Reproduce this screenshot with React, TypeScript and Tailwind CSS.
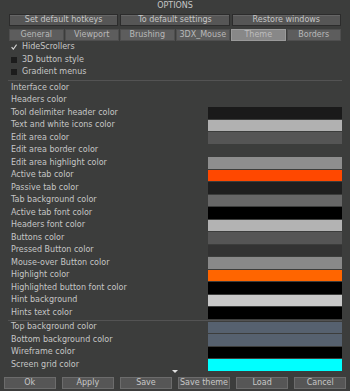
type Row = { label: string; swatch: string };

const topButtons = ["Set default hotkeys", "To default settings", "Restore windows"];
const tabs = ["General", "Viewport", "Brushing", "3DX_Mouse", "Theme", "Borders"];
const checks = [
  { label: "HideScrollers", on: true },
  { label: "3D button style", on: false },
  { label: "Gradient menus", on: false },
];

const interfaceRows: Row[] = [
  { label: "Interface color", swatch: "bg-transparent" },
  { label: "Headers color", swatch: "bg-transparent" },
  { label: "Tool delimiter header color", swatch: "bg-[#1a1a1a]" },
  { label: "Text and white icons color", swatch: "bg-[#b1b1b1]" },
  { label: "Edit area color", swatch: "bg-[#555555]" },
  { label: "Edit area border color", swatch: "bg-transparent" },
  { label: "Edit area highlight color", swatch: "bg-[#8e8e8e]" },
  { label: "Active tab color", swatch: "bg-[#ff4800]" },
  { label: "Passive tab color", swatch: "bg-[#1f1f1f]" },
  { label: "Tab background color", swatch: "bg-[#676767]" },
  { label: "Active tab font color", swatch: "bg-[#000000]" },
  { label: "Headers font color", swatch: "bg-[#b3b3b3]" },
  { label: "Buttons color", swatch: "bg-[#555555]" },
  { label: "Pressed Button color", swatch: "bg-[#333333]" },
  { label: "Mouse-over Button color", swatch: "bg-[#898989]" },
  { label: "Highlight color", swatch: "bg-[#ff6500]" },
  { label: "Highlighted button font color", swatch: "bg-[#000000]" },
  { label: "Hint background", swatch: "bg-[#c8c8c8]" },
  { label: "Hints text color", swatch: "bg-[#000000]" },
];

const sceneRows: Row[] = [
  { label: "Top background color", swatch: "bg-[#56616f]" },
  { label: "Bottom background color", swatch: "bg-[#56616f]" },
  { label: "Wireframe color", swatch: "bg-[#000000]" },
  { label: "Screen grid color", swatch: "bg-[#00ffff]" },
];

const bottomButtons = ["Ok", "Apply", "Save", "Save theme", "Load", "Cancel"];

function ColorRow({ row }: { row: Row }) {
  return (
    <div className="flex h-[12.5px] items-stretch pl-[11px] pr-[8px]">
      <div className="flex-1 whitespace-nowrap leading-[12.5px]">{row.label}</div>
      <div className="w-[134px] py-[0.5px]">
        <div className={`h-full ${row.swatch}`}></div>
      </div>
    </div>
  );
}

function Divider() {
  return (
    <div className="flex h-[2px] items-center px-[8px]">
      <div className="h-px w-full bg-[#535353]"></div>
    </div>
  );
}

export default function App() {
  return (
    <div className="flex h-[391px] w-[350px] flex-col overflow-hidden bg-[#3c3d3c] font-['DejaVu_Sans',sans-serif] text-[8px] text-[#c6c6c6]">
      <div className="h-[14px] text-center leading-[11px]">OPTIONS</div>

      <div className="grid h-[12px] grid-cols-3 gap-[2px] px-[9px]">
        {topButtons.map((b) => (
          <div
            key={b}
            className="border border-[#2c2c2c] bg-[#565656] text-center leading-[10px] whitespace-nowrap shadow-[inset_0_1px_0_#666]"
          >
            {b}
          </div>
        ))}
      </div>

      <div className="mt-[3px] grid h-[12px] grid-cols-6 gap-px px-[9px]">
        {tabs.map((t) =>
          t === "Theme" ? (
            <div key={t} className="border border-[#9a9a9a] bg-[#888888] text-center leading-[10px] text-[#bdbdbd]">
              {t}
            </div>
          ) : (
            <div key={t} className="border border-[#4e4e4e] bg-[#5d5d5d] text-center leading-[10px] text-[#b9b9b9]">
              {t}
            </div>
          )
        )}
      </div>

      <div className="flex flex-col">
        {checks.map((c) => (
          <div key={c.label} className="flex h-[12.5px] items-center gap-[5px] pl-[11px]">
            {c.on ? (
              <svg width="6" height="6" viewBox="0 0 6 6" className="shrink-0">
                <path d="M0.6 3.2 L2.3 5.2 L5.6 0.6" fill="none" stroke="#d8d8d8" strokeWidth="1.1" />
              </svg>
            ) : (
              <div className="h-[6px] w-[6px] shrink-0 bg-[#1c1c1c]"></div>
            )}
            <span className="leading-[12.5px]">{c.label}</span>
          </div>
        ))}
      </div>

      <div className="mt-px">
        <Divider />
      </div>

      <div className="flex flex-col">
        {interfaceRows.map((r) => (
          <ColorRow key={r.label} row={r} />
        ))}
      </div>

      <Divider />

      <div className="flex flex-col">
        {sceneRows.map((r) => (
          <ColorRow key={r.label} row={r} />
        ))}
      </div>

      <div className="-mt-px flex h-[7px] justify-center">
        <div className="h-0 w-0 border-x-[3px] border-t-[3px] border-x-transparent border-t-[#e0e0e0]"></div>
      </div>

      <div className="grid h-[12px] grid-cols-6 gap-[6.5px] px-[4px]">
        {bottomButtons.map((b) => (
          <div
            key={b}
            className="border border-[#6c6c6c] bg-[#565656] text-center leading-[10px] whitespace-nowrap text-[#c8c8c8]"
          >
            {b}
          </div>
        ))}
      </div>
    </div>
  );
}
